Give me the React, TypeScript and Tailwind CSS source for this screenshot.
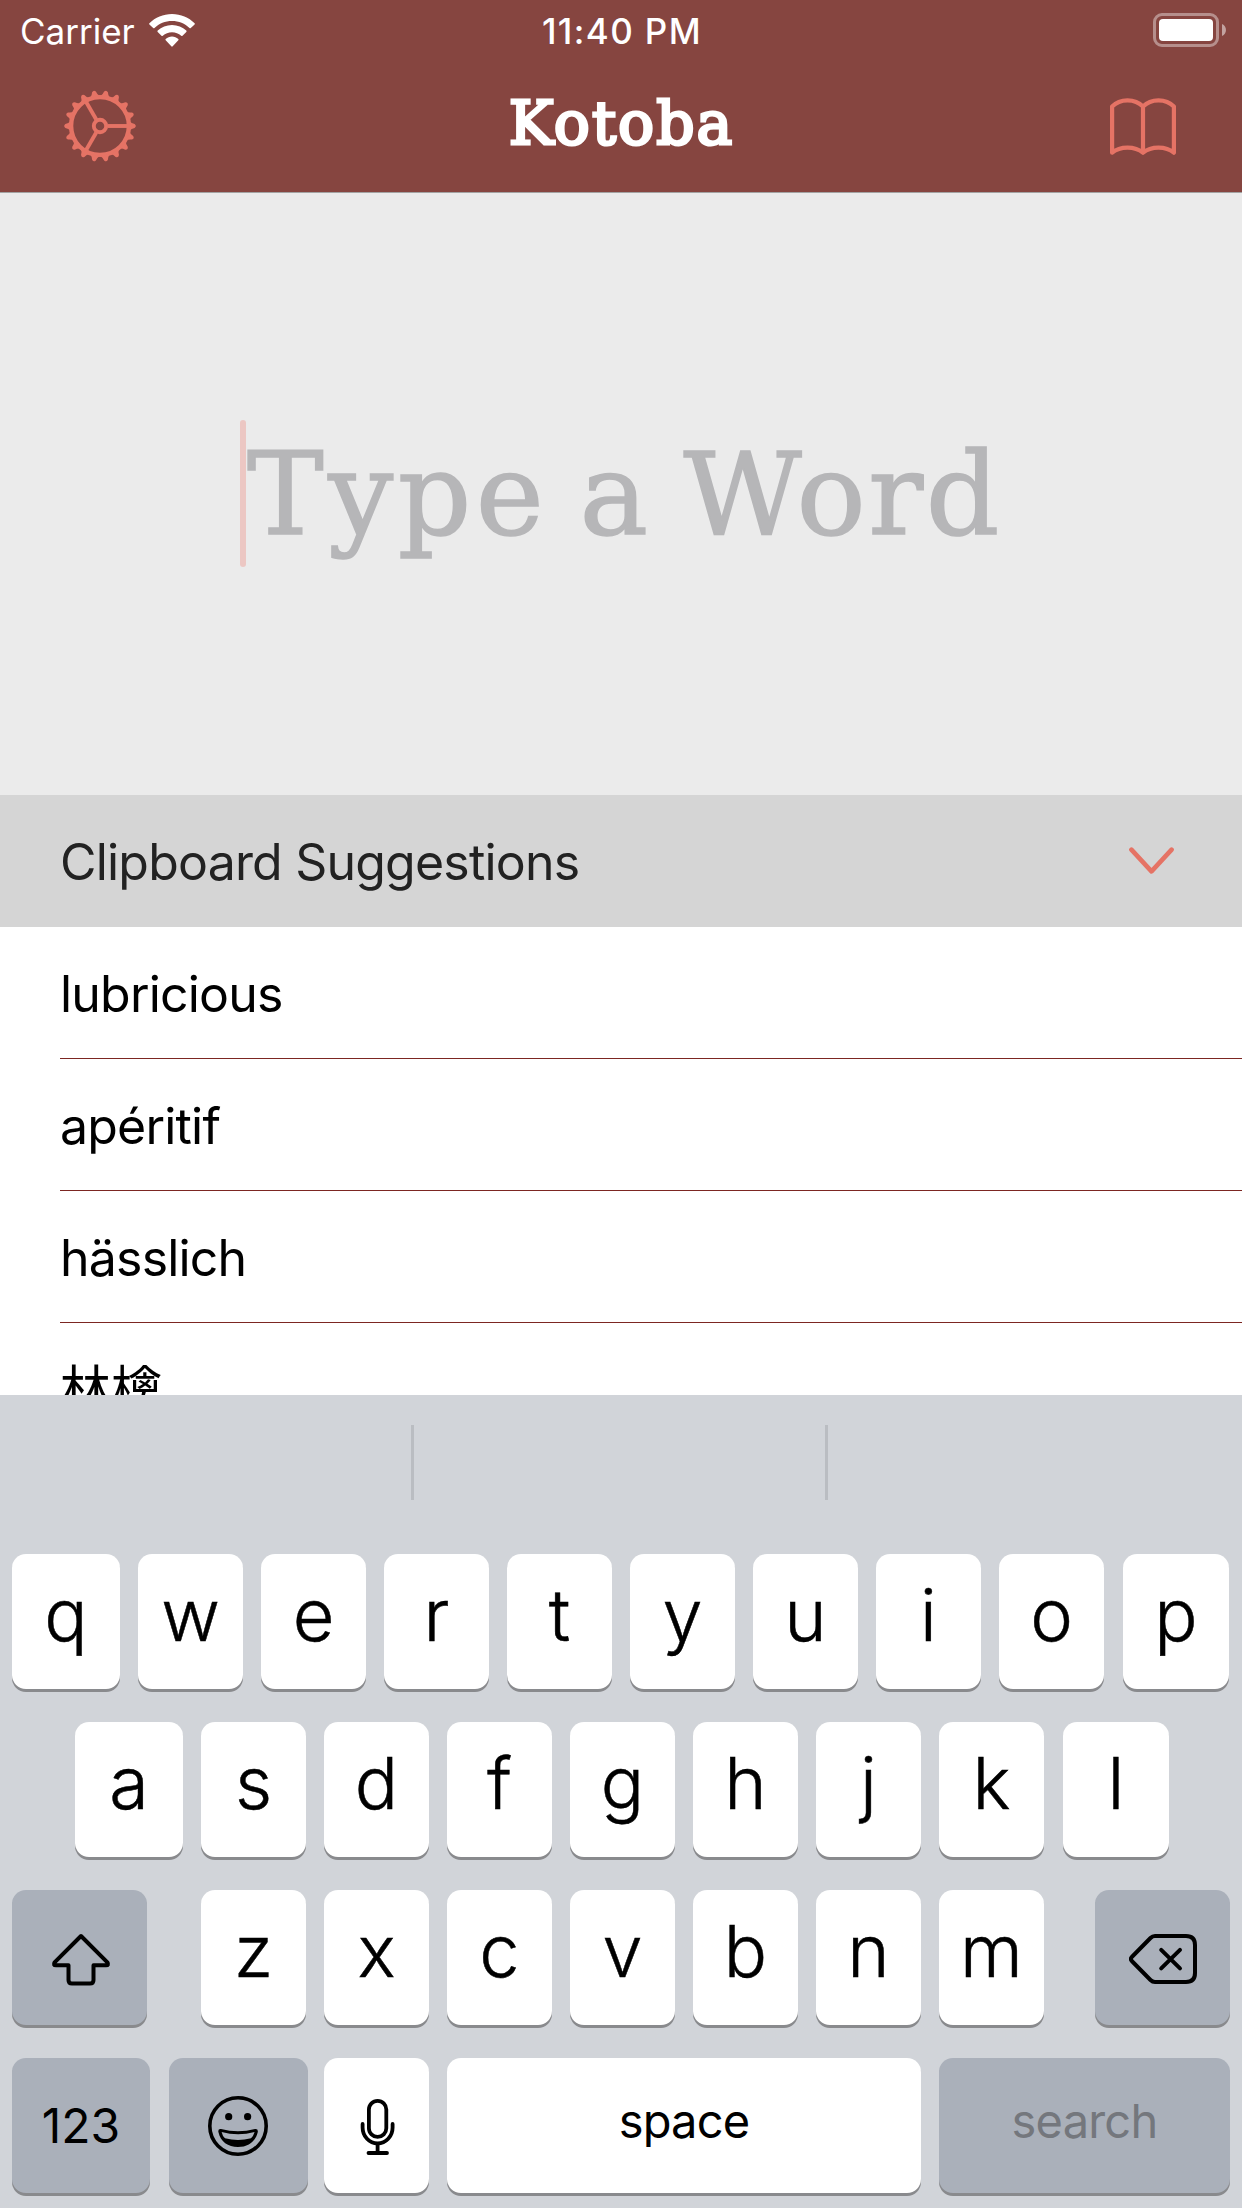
import React from "react";

const CORAL = "#e57365";

function GearIcon() {
  const teeth = Array.from({ length: 18 }, (_, i) => i * 20);
  const spokes = [0, 120, 240];
  return (
    <svg width="72" height="72" viewBox="-36 -36 72 72" fill="none" stroke={CORAL}>
      <circle r="28.900" strokeWidth="4.400" />
      {teeth.map((a) => (
        <path
          key={a}
          d="M29.500 -4.800 Q31.500 -2.600 34.600 -1.900 Q37 0 34.600 1.900 Q31.500 2.600 29.500 4.800 Z"
          fill={CORAL}
          stroke="none"
          transform={`rotate(${a})`}
        />
      ))}
      <circle r="6.200" strokeWidth="3.900" />
      {spokes.map((a) => (
        <path key={a} d="M7.500 0 H28" strokeWidth="3.900" transform={`rotate(${a})`} />
      ))}
    </svg>
  );
}

function BookIcon() {
  return (
    <svg width="66" height="58" viewBox="0 0 66 58" fill="none" stroke={CORAL} strokeWidth="4.200" strokeLinejoin="round">
      <path d="M33 8.500 C25 0.200 10 0.200 2.100 8.500 V54.700 C10 47.800 25 47.800 33 54.700 C41 47.800 56 47.800 63.900 54.700 V8.500 C56 0.200 41 0.200 33 8.500 Z M33 8.500 V54.700" />
    </svg>
  );
}

function WifiIcon() {
  return (
    <svg width="46" height="33" viewBox="0 0 46 33" fill="#fff">
      <path d="M23 0 C14.200 0 6.200 3.500 0.400 9.200 a0.900 0.900 0 0 0 0 1.200 L4.200 14 a1 1 0 0 0 1.300 0 C10 9.600 16.200 7 23 7 S36 9.600 40.500 14 a1 1 0 0 0 1.300 0 L45.600 10.400 a0.900 0.900 0 0 0 0 -1.200 C39.800 3.500 31.800 0 23 0 Z" />
      <path d="M23 11 C17.500 11 12.500 13.100 8.700 16.600 a0.900 0.900 0 0 0 0 1.300 L12.500 21.700 a1 1 0 0 0 1.300 0 C16.300 19.500 19.500 18.200 23 18.200 S29.700 19.500 32.200 21.700 a1 1 0 0 0 1.300 0 L37.300 17.900 a0.900 0.900 0 0 0 0 -1.300 C33.500 13.100 28.500 11 23 11 Z" />
      <path d="M23 22.600 C20.600 22.600 18.400 23.500 16.700 25 a0.900 0.900 0 0 0 0 1.300 L22.300 32.300 a1 1 0 0 0 1.400 0 L29.300 26.300 a0.900 0.900 0 0 0 0 -1.300 C27.600 23.500 25.400 22.600 23 22.600 Z" />
    </svg>
  );
}

function BatteryIcon() {
  return (
    <svg width="74" height="34" viewBox="0 0 74 34">
      <rect x="1.500" y="1.500" width="63" height="31" rx="7.500" fill="none" stroke="#fff" strokeOpacity="0.4" strokeWidth="3" />
      <rect x="6" y="6" width="54" height="22" rx="4" fill="#fff" />
      <path d="M69 11 C74.300 13 74.300 21 69 23 Z" fill="#fff" fillOpacity="0.5" />
    </svg>
  );
}

function ShiftIcon() {
  return (
    <svg width="60" height="54" viewBox="0 0 60 54" fill="none" stroke="#000" strokeWidth="4" strokeLinejoin="round">
      <path d="M30 3 L3.600 29.400 Q1.800 32.300 5 32.300 H17.500 V47 Q17.500 50.500 21 50.500 H39 Q42.500 50.500 42.500 47 V32.300 H55 Q58.200 32.300 56.400 29.400 Z" />
    </svg>
  );
}

function DeleteIcon() {
  return (
    <svg width="68" height="50" viewBox="0 0 68 50" fill="none" stroke="#000" strokeWidth="4" strokeLinejoin="round" strokeLinecap="round">
      <path d="M26 2 H57 Q66 2 66 11 V39 Q66 48 57 48 H26 Q23.500 48 21.500 46 L2.800 27 Q1 25 2.800 23 L21.500 4 Q23.500 2 26 2 Z" />
      <path d="M32.200 15.800 L51 34.400 M51 15.800 L32.200 34.400" />
    </svg>
  );
}

function EmojiIcon() {
  return (
    <svg width="60" height="60" viewBox="0 0 60 60">
      <circle cx="30" cy="30" r="28.200" fill="none" stroke="#000" strokeWidth="3.600" />
      <circle cx="20.700" cy="20.700" r="3.600" />
      <circle cx="39.600" cy="20.700" r="3.600" />
      <path d="M13 33 Q9.800 32.500 10.400 36 C12.500 45.800 20 51 30 51 S47.500 45.800 49.800 36 Q50.200 32.500 47 33 Q30 37.500 13 33 Z" />
      <path d="M13.600 36 Q30 40.500 46.600 36 Q45.300 40.500 43 42.300 Q30 45.600 17 42.300 Q14.600 40.500 13.600 36 Z" fill="#aab0ba" />
    </svg>
  );
}

function MicIcon() {
  return (
    <svg width="36" height="56" viewBox="0 0 36 56" fill="none" stroke="#000" strokeWidth="3.800" strokeLinecap="round">
      <rect x="8.900" y="1.900" width="17.400" height="36" rx="8.700" />
      <path d="M2.600 25 V28.500 A15 16 0 0 0 32.600 28.500 V25 M17.600 45 V53 M8.500 54 H27" />
    </svg>
  );
}

function Key({ w, dark, children }: { w: string; dark?: boolean; children: React.ReactNode }) {
  return (
    <div
      className={`${w} ${dark ? "bg-[#aab0ba]" : "bg-white"} flex h-[135px] shrink-0 items-center justify-center rounded-[14px] shadow-[0_3px_0_#898a8d]`}
    >
      {children}
    </div>
  );
}

function Letter({ c, w = "w-[105px]" }: { c: string; w?: string }) {
  return (
    <Key w={w}>
      <span className="-mt-[13px] text-[72px] leading-[100px] font-[350] [-webkit-text-stroke:0.5px_#000]">{c}</span>
    </Key>
  );
}

function Row({ word, last }: { word: string; last?: boolean }) {
  return (
    <div className="flex h-[132px] shrink-0 pl-[60px]">
      <div
        className={`flex-1 pt-[34px] leading-[66px] text-black ${last ? "text-[51px]" : "border-b border-[#7c2622] text-[50px] tracking-[-0.8px]"}`}
      >
        {word}
      </div>
    </div>
  );
}

export default function App() {
  return (
    <div className="flex h-[2208px] w-[1242px] flex-col overflow-hidden bg-white font-['Inter','Noto_Sans_CJK_JP',sans-serif]">
      <header className="flex h-[193px] shrink-0 flex-col border-b border-[#a3a3a3] bg-[#864540] text-white">
        <div className="grid h-[60px] grid-cols-3 items-center pr-[15px] pl-[20px]">
          <div className="flex items-center gap-[14px] text-[35px] leading-[40px] tracking-[0px]">
            <span className="pt-px">Carrier</span>
            <WifiIcon />
          </div>
          <div className="pt-px pr-[3px] text-center text-[35px] leading-[40px] font-medium tracking-[1.400px]">11:40 PM</div>
          <div className="flex justify-end">
            <BatteryIcon />
          </div>
        </div>
        <div className="flex h-[132px] items-center justify-between pr-[66px] pl-[64px]">
          <GearIcon />
          <h1 className="mr-[3px] -mt-[6px] font-['DejaVu_Serif',serif] text-[60px] leading-[80px] tracking-[2px] [-webkit-text-stroke:3px_#fff]">
            Kotoba
          </h1>
          <div className="pt-px">
            <BookIcon />
          </div>
        </div>
      </header>

      <main className="flex h-[602px] shrink-0 items-center bg-[#ebebeb] pl-[240px]">
        <div className="-mt-[2px] h-[147px] w-[6px] rounded-full bg-[#ecc7c3]" />
        <div className="pl-px font-['DejaVu_Serif',serif] text-[115px] leading-[150px] tracking-[4.500px] [word-spacing:-10px] whitespace-nowrap text-[#b6b6b8] [-webkit-text-stroke:1.500px_#b6b6b8]">
          Type a <span className="tracking-[2.500px]">Word</span>
        </div>
      </main>

      <section className="flex h-[600px] shrink-0 flex-col overflow-hidden">
        <div className="flex h-[132px] shrink-0 items-center justify-between bg-[#d5d5d5] pr-[67px] pl-[60px]">
          <h2 className="pt-[2px] text-[50px] leading-[66px] tracking-[-0.8px] text-[#222]">Clipboard Suggestions</h2>
          <svg width="46" height="28" viewBox="0 0 46 28" fill="none" stroke={CORAL} strokeWidth="4.600" strokeLinecap="round" strokeLinejoin="round">
            <path d="M2.400 2.600 L22.500 24.400 L42.600 2.600" />
          </svg>
        </div>
        <Row word="lubricious" />
        <Row word="apéritif" />
        <Row word="hässlich" />
        <Row word="林檎" last />
      </section>

      <section className="flex h-[813px] shrink-0 flex-col bg-[#d1d4d9] text-black">
        <div className="flex h-[159px] shrink-0 pt-[30px] pl-[411px]">
          <div className="h-[75px] w-[3px] bg-[#babdc2]" />
          <div className="ml-[411px] h-[75px] w-[3px] bg-[#babdc2]" />
        </div>
        <div className="flex flex-col gap-[33px] px-3">
          <div className="flex gap-[18px]">
            <Letter c="q" w="w-[108px]" />
            {"wertyuio".split("").map((c) => (
              <Letter key={c} c={c} />
            ))}
            <div className="pl-px">
              <Letter c="p" w="w-[106px]" />
            </div>
          </div>
          <div className="flex gap-[18px] pl-[63px]">
            <Letter c="a" w="w-[108px]" />
            {"sdfghjk".split("").map((c) => (
              <Letter key={c} c={c} />
            ))}
            <div className="pl-px">
              <Letter c="l" w="w-[106px]" />
            </div>
          </div>
          <div className="flex justify-between">
            <Key w="w-[135px]" dark>
              <div className="pt-1 pl-[3px]">
                <ShiftIcon />
              </div>
            </Key>
            <div className="flex gap-[18px] pl-[3px]">
              {"zxcvbnm".split("").map((c) => (
                <Letter key={c} c={c} />
              ))}
            </div>
            <Key w="w-[135px]" dark>
              <div className="pt-[3px] pl-px">
                <DeleteIcon />
              </div>
            </Key>
          </div>
          <div className="flex">
            <Key w="w-[138px]" dark>
              <span className="text-[48px] leading-[60px]">123</span>
            </Key>
            <div className="w-[19px]" />
            <Key w="w-[139px]" dark>
              <div className="pr-px">
                <EmojiIcon />
              </div>
            </Key>
            <div className="w-[16px]" />
            <Key w="w-[105px]">
              <div className="pt-[3px] pl-[2px]">
                <MicIcon />
              </div>
            </Key>
            <div className="w-[18px]" />
            <Key w="w-[474px]">
              <span className="-mt-[9px] text-[47px] leading-[60px] tracking-[-0.8px]">space</span>
            </Key>
            <div className="w-[18px]" />
            <Key w="w-[291px]" dark>
              <span className="-mt-[9px] text-[47px] leading-[60px] tracking-[-0.8px] text-[#74777d]">search</span>
            </Key>
          </div>
        </div>
      </section>
    </div>
  );
}
